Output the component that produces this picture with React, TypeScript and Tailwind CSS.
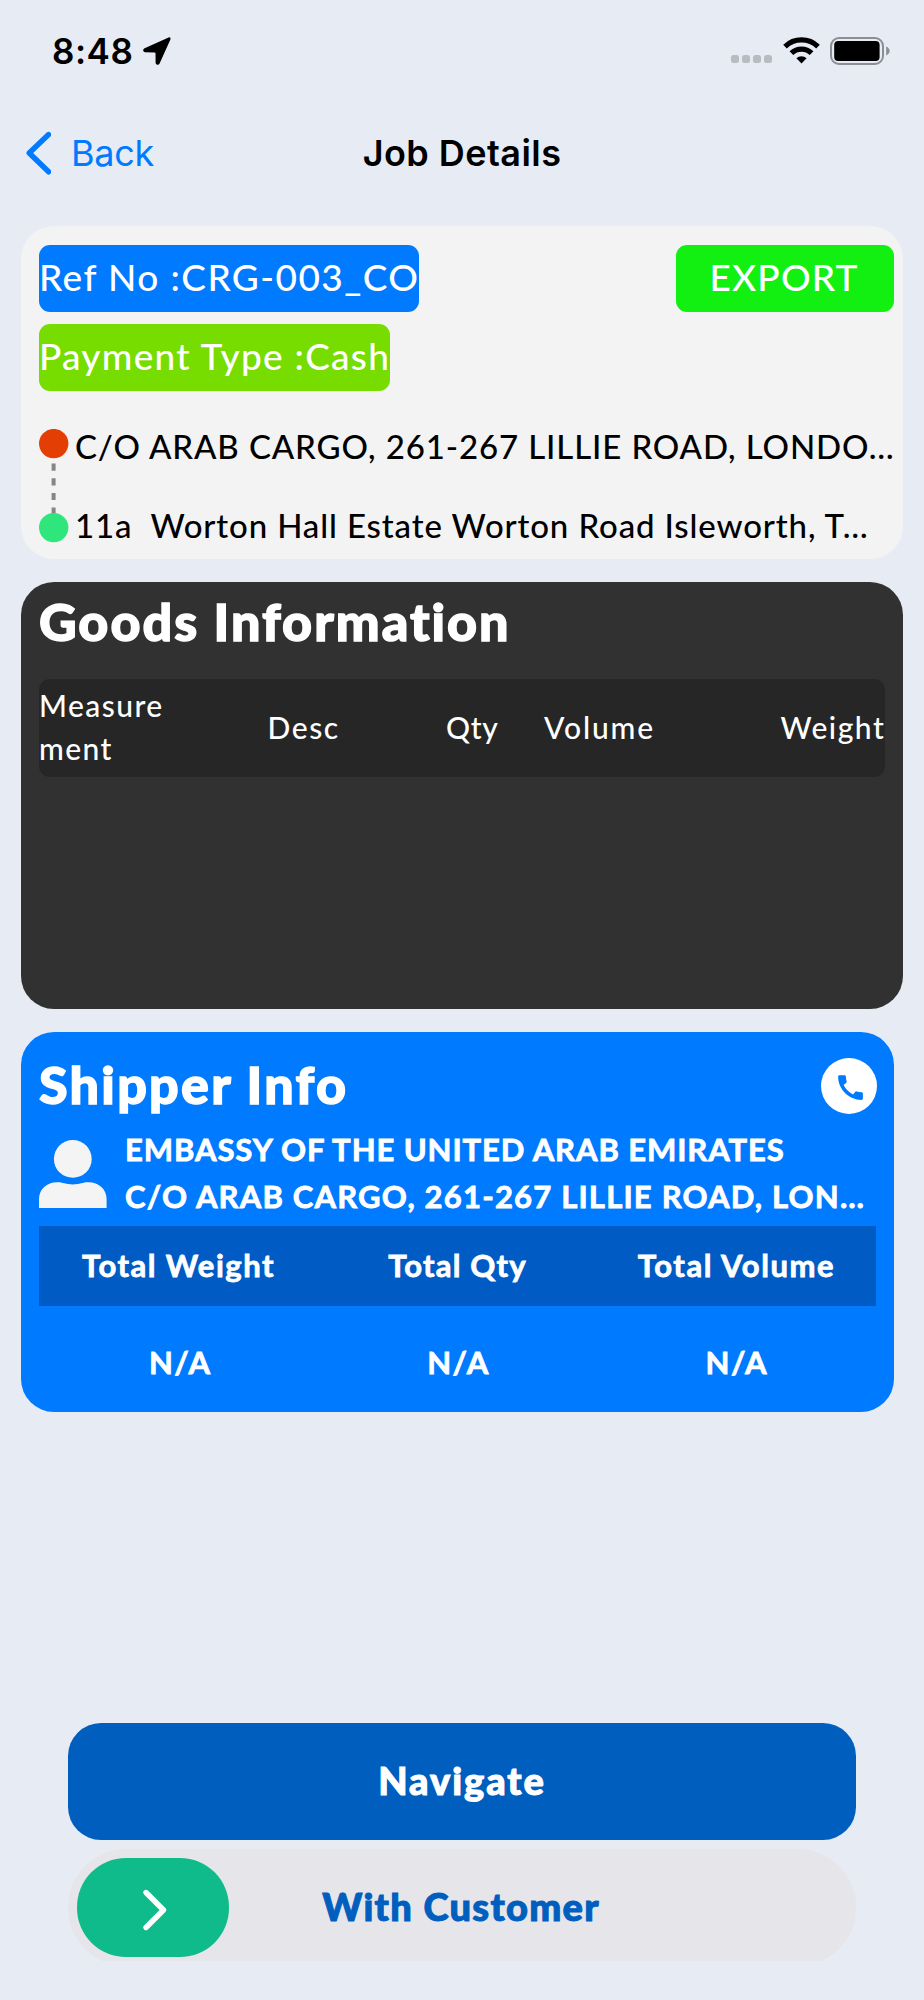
import React from "react";
import { MdCall } from "react-icons/md";

function StatusBar() {
  return (
    <div className="flex h-[101px] items-center justify-between pl-[52px] pr-[34px] font-['Inter',sans-serif]">
      <div className="flex items-center gap-[10px]">
        <span className="pt-[2px] text-[35px] font-semibold leading-none tracking-[0.5px]">8:48</span>
        <svg className="h-[28px] w-[28px]" viewBox="0 0 28 28">
          <path
            d="M25.6 .5 L1.6 11.2 C-.6 12.3 -.1 15.3 2.2 15.3 L11.6 15.4 C12.2 15.4 12.5 15.7 12.5 16.3 L12.6 25.6 C12.6 28.2 15.6 28.6 16.7 26.3 L27.4 2.4 C27.9 1.1 26.9 -.1 25.6 .5 Z"
            fill="#000"
          />
        </svg>
      </div>
      <div className="flex items-center">
        <div className="mt-[17px] flex gap-[3px]">
          {[0, 1, 2, 3].map((i) => (
            <span key={i} className="h-[8px] w-[8px] rounded-[2.5px] bg-[#b8bcc0]" />
          ))}
        </div>
        <svg className="ml-[11px] h-[27px] w-[37px]" viewBox="0 0 37 27">
          <g fill="none" stroke="#000" strokeWidth="5.2">
            <path d="M2 9.6 A23.6 23.6 0 0 1 35 9.6" />
            <path d="M8.4 16.2 A14.4 14.4 0 0 1 28.6 16.2" />
          </g>
          <path d="M18.5 26.4 L13.4 21.3 A7.2 7.2 0 0 1 23.6 21.3 Z" fill="#000" />
        </svg>
        <svg className="ml-[10px] h-[28px] w-[60px]" viewBox="0 0 60 28">
          <rect x="1" y="1" width="52" height="26" rx="8" fill="none" stroke="#8b8e93" strokeWidth="2" />
          <rect x="4.2" y="4" width="45.4" height="20" rx="4" fill="#000" />
          <path d="M56.2 9.6 C58.4 10.6 59.6 12.2 59.6 14 C59.6 15.8 58.4 17.4 56.2 18.4 Z" fill="#8b8e93" />
        </svg>
      </div>
    </div>
  );
}

function NavBar() {
  return (
    <div className="grid h-[104px] grid-cols-[1fr_auto_1fr] items-center font-['Inter',sans-serif]">
      <div className="flex items-center gap-[20px] pl-[25px] text-[#007aff]">
        <svg className="h-[44px] w-[26px]" viewBox="0 0 26 44">
          <path d="M23.6 3.5 L4.2 22 L23.6 40.8" fill="none" stroke="currentColor" strokeWidth="5.4" strokeLinecap="round" strokeLinejoin="round" />
        </svg>
        <span className="text-[36px] font-normal leading-none tracking-[-0.28px]">Back</span>
      </div>
      <h1 className="text-[36px] font-semibold leading-none tracking-[0.45px]">Job Details</h1>
      <div />
    </div>
  );
}

function SummaryCard() {
  return (
    <section className="ml-[21px] flex h-[333px] w-[882px] flex-col rounded-[33px] bg-[#f3f3f3] pl-[18px] pr-[9px] pt-[19px]">
      <div className="flex justify-between text-[37px] leading-none text-white">
        <span className="flex h-[67px] w-[380px] items-center whitespace-pre rounded-[11px] bg-[#007aff] pb-[5px] tracking-[1.45px]">Ref No :CRG-003_CO</span>
        <span className="flex h-[67px] w-[218px] items-center justify-center rounded-[11px] bg-[#12f012] pb-[5px] pr-[2px] tracking-[1.15px]">EXPORT</span>
      </div>
      <div className="mt-[12px] flex text-[37px] leading-none text-white">
        <span className="flex h-[67px] w-[351px] items-center whitespace-pre rounded-[11px] bg-[#77dc00] pb-[5px] tracking-[1.28px]">Payment Type :Cash</span>
      </div>
      <div className="mt-[38px] flex">
        <svg className="h-[114px] w-[30px] shrink-0" viewBox="0 0 30 114">
          <circle cx="14.7" cy="14.6" r="14.7" fill="#e33f04" />
          <path d="M14.6 34.5 V86" stroke="#868686" strokeWidth="4" strokeDasharray="7.2 7.5" />
          <circle cx="14.7" cy="98.6" r="14.7" fill="#2fe67c" />
        </svg>
        <div className="ml-[6px] mt-[1px] whitespace-pre text-[33px] leading-[33px]">
          <p className="tracking-[0.88px]">C/O ARAB CARGO, 261-267 LILLIE ROAD, LONDO…</p>
          <p className="mt-[46px] tracking-[0.87px]">11a  Worton Hall Estate Worton Road Isleworth, T…</p>
        </div>
      </div>
    </section>
  );
}

function GoodsCard() {
  return (
    <section className="ml-[21px] mt-[23px] h-[427px] w-[882px] rounded-[33px] bg-[#313131] px-[18px] pt-[13px] text-white">
      <h2 className="text-[52px] font-black leading-[52px] tracking-[2.01px] [-webkit-text-stroke:1.4px_currentColor]">Goods Information</h2>
      <div className="mt-[32px] grid h-[98px] grid-cols-[228.5px_178.5px_98px_236.5px_1fr] items-center rounded-[11px] bg-[#262626] pb-[2px] text-[30px] leading-[43px]">
        <span className="tracking-[1.45px]">
          Measure
          <br />
          ment
        </span>
        <span className="tracking-[1.6px]">Desc</span>
        <span className="tracking-[0.64px]">Qty</span>
        <span className="tracking-[1.85px]">Volume</span>
        <span className="tracking-[1.5px]">Weight</span>
      </div>
    </section>
  );
}

function ShipperCard() {
  return (
    <section className="ml-[21px] mt-[23px] h-[380px] w-[873px] rounded-[33px] bg-[#007aff] pl-[18px] pr-[17px] pt-[26px] font-bold text-white [-webkit-text-stroke:0.8px_currentColor]">
      <div className="flex h-[56px] items-center justify-between">
        <h2 className="pb-[5px] text-[52px] font-black leading-none tracking-[2.27px] [-webkit-text-stroke:1.4px_currentColor]">Shipper Info</h2>
        <span className="flex h-[56px] w-[56px] items-center justify-center rounded-full bg-white pl-[2px] pt-[2px] text-[#007aff]">
          <MdCall className="h-[33px] w-[33px]" />
        </span>
      </div>
      <div className="flex">
        <svg className="mt-[26px] h-[68px] w-[68px] shrink-0" viewBox="0 0 68 68">
          <circle cx="33.8" cy="18.9" r="18.9" fill="#f4f4f4" />
          <path d="M0 68 V59 C0 49 8 42.2 18 42.2 C24 42.2 27 44.4 33.8 44.4 C40.6 44.4 43.6 42.2 49.6 42.2 C59.6 42.2 67.6 49 67.6 59 V68 Z" fill="#f4f4f4" />
        </svg>
        <div className="ml-[18px] mt-[12px] whitespace-nowrap text-[31px] leading-[47px]">
          <p className="tracking-[0.92px]">EMBASSY OF THE UNITED ARAB EMIRATES</p>
          <p className="tracking-[1.2px]">C/O ARAB CARGO, 261-267 LILLIE ROAD, LON…</p>
        </div>
      </div>
      <div className="mt-[6px] grid h-[80px] w-[837px] grid-cols-3 items-center bg-[#005bc4] pb-[1px] text-center text-[31px] leading-none">
        <span className="tracking-[1.5px]">Total Weight</span>
        <span className="tracking-[1.2px]">Total Qty</span>
        <span className="tracking-[1.6px]">Total Volume</span>
      </div>
      <div className="grid h-[106px] w-[837px] grid-cols-3 items-center pl-[2px] pt-[7px] text-center text-[31px] leading-none tracking-[1.5px]">
        <span>N/A</span>
        <span>N/A</span>
        <span>N/A</span>
      </div>
    </section>
  );
}

function Actions() {
  return (
    <div className="mx-auto mt-[311px] w-[788px] text-[38px] font-black leading-none">
      <button className="flex h-[117px] w-full items-center justify-center rounded-[33px] bg-[#005ebe] pb-[4px] tracking-[1.95px] text-white [-webkit-text-stroke:1px_currentColor]">Navigate</button>
      <div className="mt-[9px] h-[112px] overflow-hidden">
        <div className="grid h-[117px] grid-cols-[1fr_auto_1fr] items-center rounded-[58px] bg-[#e5e5ea]">
          <span className="ml-[9px] flex h-[99px] w-[152px] items-center justify-center rounded-[49px] bg-[#10bb8b]">
            <svg className="ml-[4px] mt-[4px] h-[44px] w-[26px]" viewBox="0 0 26 44">
              <path d="M4 4.5 L21.5 22 L4 39.5" fill="none" stroke="#fff" strokeWidth="5.4" strokeLinecap="round" strokeLinejoin="round" />
            </svg>
          </span>
          <span className="pb-[3px] pr-[2px] tracking-[1.3px] text-[#005ebe] [-webkit-text-stroke:1px_currentColor]">With Customer</span>
          <span />
        </div>
      </div>
    </div>
  );
}

export default function App() {
  return (
    <main className="h-[2000px] w-[924px] overflow-hidden bg-[#e7ecf4] font-['Lato',sans-serif] font-medium text-black">
      <StatusBar />
      <NavBar />
      <div className="pt-[21px]">
        <SummaryCard />
        <GoodsCard />
        <ShipperCard />
        <Actions />
      </div>
    </main>
  );
}
